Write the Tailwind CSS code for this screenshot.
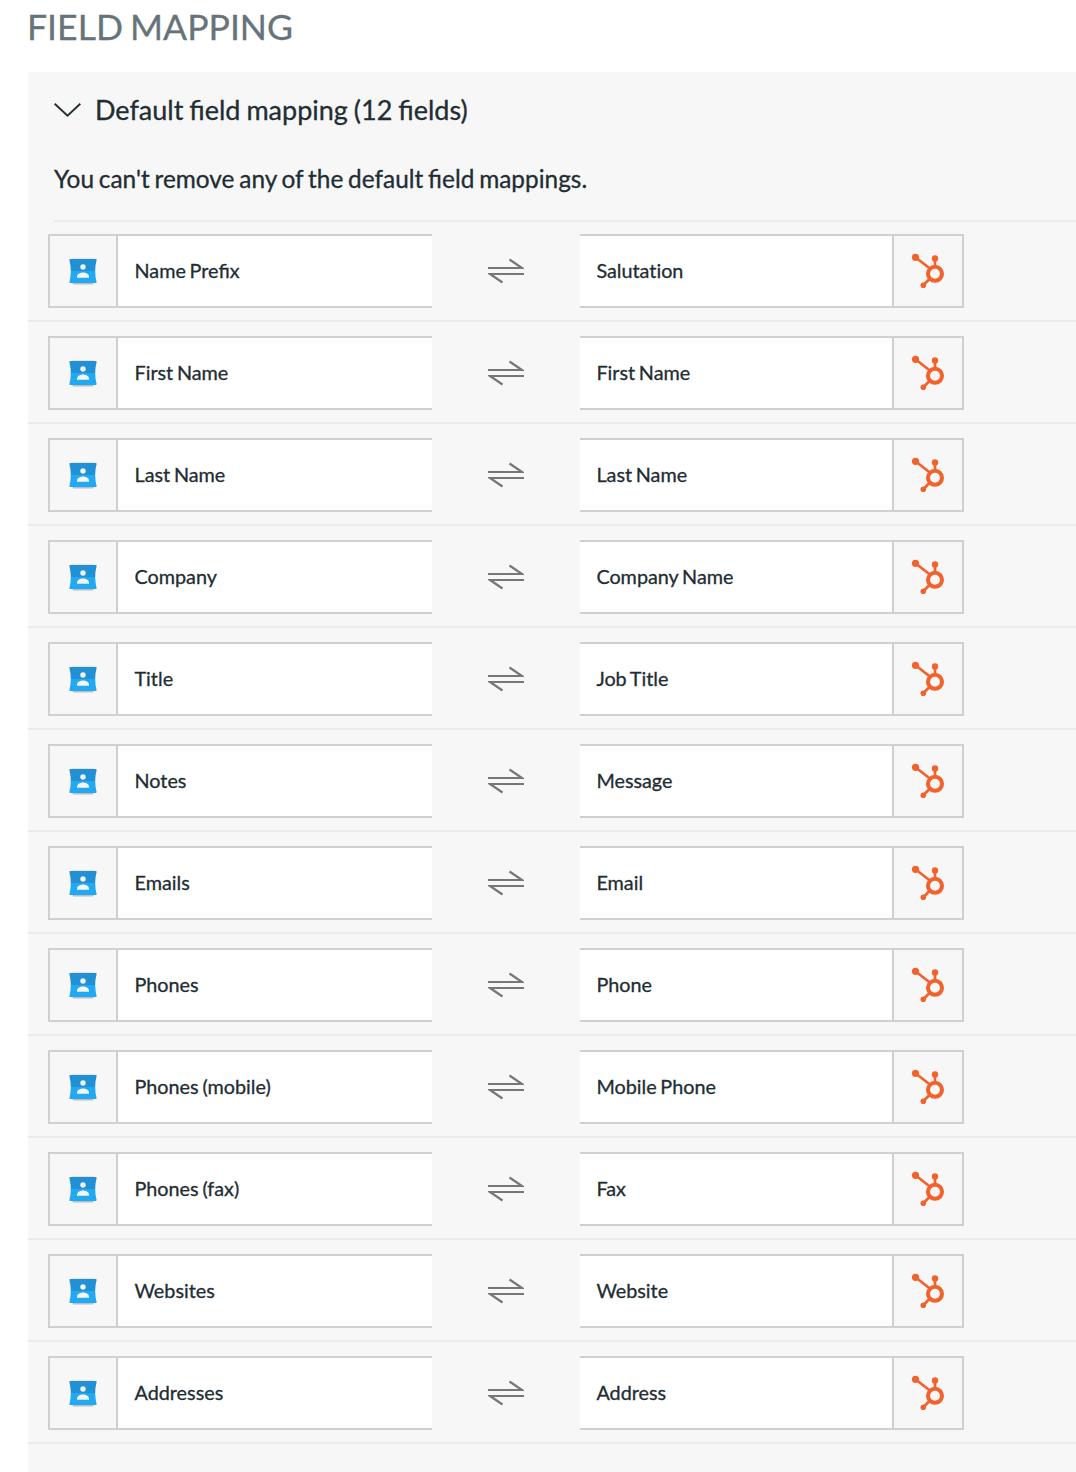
<!DOCTYPE html>
<html lang="en">
<head>
    <meta charset="UTF-8">
    <meta name="viewport" content="width=device-width, initial-scale=1.0">
    <title>Field Mapping</title>
    <script src="https://cdn.jsdelivr.net/npm/@tailwindcss/browser@4"></script>
</head>
<body class="h-[1472px] overflow-hidden bg-white pl-7 font-['Lato',sans-serif] text-[#222d33] [-webkit-text-stroke:0.3px]">
    <h1 class="-ml-px h-[72px] pt-[5px] text-[35.6px] leading-[44px] [word-spacing:-2px] whitespace-nowrap text-[#67737a]">FIELD MAPPING</h1>

    <section class="h-[1400px] bg-[#f7f7f7]">
        <div class="flex h-[76px] items-center pl-[26px]">
            <svg class="h-[16px] w-[27px]" viewBox="0 0 27 16" fill="none" stroke="#263238" stroke-width="2">
                <path d="M0.7 1.7 13.5 13.7 26.3 1.7"/>
            </svg>
            <h2 class="ml-[14px] text-[27px] leading-[36px] [word-spacing:-1px] whitespace-nowrap">Default field mapping (12 fields)</h2>
        </div>
        <p class="h-[72px] pt-[15px] pl-[26px] text-[24.4px] leading-[32px] [word-spacing:-1.4px] whitespace-nowrap">You can't remove any of the default field mappings.</p>
        <div class="ml-[26px] h-[2px] bg-[#ebebeb]"></div>
        <div id="mapping-list" class="-mt-[2px]"></div>
    </section>

    <script>
        const mappings = [
            ['Name Prefix', 'Salutation'],
            ['First Name', 'First Name'],
            ['Last Name', 'Last Name'],
            ['Company', 'Company Name'],
            ['Title', 'Job Title'],
            ['Notes', 'Message'],
            ['Emails', 'Email'],
            ['Phones', 'Phone'],
            ['Phones (mobile)', 'Mobile Phone'],
            ['Phones (fax)', 'Fax'],
            ['Websites', 'Website'],
            ['Addresses', 'Address'],
        ];

        const list = document.getElementById('mapping-list');

        mappings.forEach(([source, target]) => {
            const row = document.createElement('div');
            row.className = 'flex h-[102px] border-b-2 border-[#ebebeb] pt-[14px] pl-5';
            row.innerHTML = `
                <div class="flex h-[74px] w-[384px] border-y-2 border-l-2 border-[#d0d0d0] bg-white">
                    <div class="flex w-[68px] shrink-0 items-center justify-center border-r-2 border-[#d0d0d0] bg-[#f7f7f7]">
                        <svg class="h-[30px] w-[30px]" viewBox="0 0 30 30">
                            <path d="M4 2h22v2H4z" fill="#e3e3e3"/>
                            <path d="M4 26h22l-1 2.5H5z" fill="#bdbdbd"/>
                            <path d="M2.3 3h25.4q1 0 .9 1-1.4 5.5-1.4 11H2.8q0-5.5-1.4-11-.1-1 .9-1z" fill="#2290d5"/>
                            <path d="M2.8 15h24.4q0 5.5 1.4 11 .1 1-.9 1H2.3q-1 0-.9-1 1.4-5.5 1.4-11z" fill="#21a9f3"/>
                            <circle cx="15" cy="11" r="2.7" fill="#f5f5f5"/>
                            <path d="M9 21.7v-1.2c0-2.7 3.8-4.1 6-4.1s6 1.4 6 4.1v1.2z" fill="#f5f5f5"/>
                        </svg>
                    </div>
                    <div class="flex items-center pb-[2px] pl-[16.5px] text-[19.8px] leading-[24px] [word-spacing:-1.3px] whitespace-nowrap">${source}</div>
                </div>
                <div class="flex h-[74px] w-[148px] items-center justify-center">
                    <svg class="h-[26px] w-[36px]" viewBox="0 0 36 26" fill="none" stroke="#777" stroke-width="2.2">
                        <path d="M0 10H34L21.5 1.5"/>
                        <path d="M36 16H2L14.5 24.5"/>
                    </svg>
                </div>
                <div class="flex h-[74px] w-[384px] border-y-2 border-r-2 border-[#d0d0d0] bg-white">
                    <div class="flex flex-1 items-center pb-[2px] pl-[16.4px] text-[19.8px] leading-[24px] [font-variant-ligatures:no-common-ligatures] [word-spacing:-1.3px] whitespace-nowrap">${target}</div>
                    <div class="flex w-[70px] shrink-0 items-center justify-center border-l-2 border-[#d0d0d0] bg-[#f7f7f7]">
                        <svg class="h-[36px] w-[34px]" viewBox="0 0 34 36" fill="none" stroke="#f2622c">
                            <circle cx="24" cy="20.8" r="7" stroke-width="4.1"/>
                            <path d="M4.5 4.3 18.5 15.3M24 6v8M12.5 32l6-6" stroke-width="2.7"/>
                            <circle cx="4.5" cy="4.3" r="3.6" fill="#f2622c" stroke="none"/>
                            <circle cx="24" cy="5.5" r="3.2" fill="#f2622c" stroke="none"/>
                            <circle cx="12.3" cy="32.2" r="2.8" fill="#f2622c" stroke="none"/>
                        </svg>
                    </div>
                </div>
            `;
            list.appendChild(row);
        });
    </script>
</body>
</html>
